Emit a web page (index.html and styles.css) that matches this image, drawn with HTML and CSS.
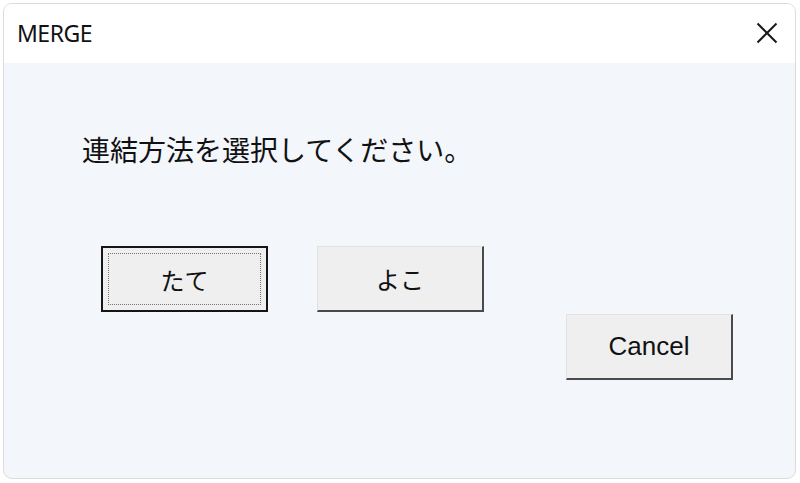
FILE: index.html
```
<html>
<head>
	<link rel="stylesheet" href="styles.css">
</head>
<body>
	<div class="dialog">
		<div class="titlebar">
			<span class="title">MERGE</span>
			<svg class="close" width="22" height="22" viewBox="0 0 22 22">
				<path d="M1.5 1.5 L20.5 20.5 M20.5 1.5 L1.5 20.5" stroke="#1a1a1a" stroke-width="2" fill="none"/>
			</svg>
		</div>
		<div class="content">
			<p class="msg">連結方法を選択してください。</p>
			<div class="row">
				<button class="btn default"><span class="focus">たて</span></button>
				<button class="btn">よこ</button>
			</div>
			<div class="row end">
				<button class="btn latin">Cancel</button>
			</div>
		</div>
	</div>
</body>
</html>
```

FILE: styles.css
```
body {margin:0;background:#fff;}
.dialog {margin:3px;width:791px;height:474px;border:1px solid #dcdcdc;border-radius:9px;overflow:hidden;
	background:#f3f6fb;display:flex;flex-direction:column;}
.titlebar {height:59px;background:#fff;display:flex;align-items:center;justify-content:space-between;
	padding:0 17px 0 13px;}
.title {font-family:"Noto Sans",sans-serif;font-size:23px;color:#111;margin-top:-1px;letter-spacing:-0.5px;}
.close {margin-top:-1px;}
.content {flex:1;padding:0 62px 0 78px;}
.msg {margin:69px 0 0 0;font-family:"Noto Sans CJK JP",sans-serif;font-size:28px;line-height:34px;color:#111;}
.row {display:flex;gap:49px;margin:80px 0 0 19px;}
.row.end {justify-content:flex-end;margin-top:2px;}
.btn {width:167px;height:66px;background:#efefef;padding:0;
	border-top:1px solid #e2e2e2;border-left:1px solid #e2e2e2;
	border-right:2px solid #4a4a4a;border-bottom:2px solid #4a4a4a;
	font-family:"Noto Sans CJK JP",sans-serif;font-size:24px;color:#111;}
.btn.default {border:2px solid #151515;padding:5px;}
.focus {display:flex;align-items:center;justify-content:center;height:100%;
	border:1px dotted #777;box-sizing:border-box;}
.btn.latin {font-family:"Liberation Sans",sans-serif;font-size:26px;}
```
